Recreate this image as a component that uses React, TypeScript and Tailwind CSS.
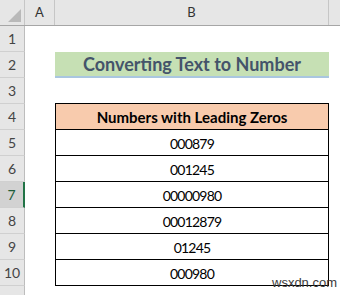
import React from 'react';

const rows = [
  { n: 1 },
  { n: 2, title: 'Converting Text to Number' },
  { n: 3, tableTop: true },
  { n: 4, head: 'Numbers with Leading Zeros' },
  { n: 5, value: '000879' },
  { n: 6, value: '001245' },
  { n: 7, value: '00000980', selected: true },
  { n: 8, value: '00012879' },
  { n: 9, value: '01245' },
  { n: 10, value: '000980' },
  { n: 11, hidden: true },
];

const App: React.FC = () => (
  <div className="relative h-[295px] w-[340px] overflow-hidden bg-white font-['Lato','Open_Sans',sans-serif] text-[14px] text-black">
    {/* Column headers */}
    <div className="flex h-[26px] border-b border-[#a6a6a6] bg-[#e6e6e6] text-[13px] text-[#333]">
      <div className="relative w-[25px] border-r border-[#c6c6c6]">
        <svg className="absolute right-[3px] bottom-[3px]" width="13" height="13" viewBox="0 0 13 13">
          <polygon points="13,0 13,13 0,13" fill="#b9b9b9" />
        </svg>
      </div>
      <div className="flex w-[30px] items-center justify-center border-r border-[#c6c6c6]">A</div>
      <div className="flex w-[274px] items-center justify-center border-r border-[#c6c6c6]">B</div>
      <div className="flex-1" />
    </div>

    {/* Rows */}
    {rows.map((r) => (
      <div key={r.n} className="flex h-[26px]">
        <div
          className={`box-border flex w-[25px] items-center justify-center border-b border-[#d0d0d0] text-[14px] ${
            r.selected ? 'border-r-2 border-r-[#217346] bg-[#d2d2d2] text-[#1e5e3a]' : 'border-r border-r-[#bdbdbd] bg-[#e6e6e6] text-[#444]'
          }`}
        >
          {r.hidden ? '' : r.n}
        </div>
        <div className="w-[30px]" />
        {r.title ? (
          <div className="box-border flex w-[274px] items-center justify-center border-b-2 border-[#a9c6e0] bg-[#c6e0b4] text-[18px] font-bold text-[#44546a]">
            {r.title}
          </div>
        ) : r.tableTop ? (
          <div className="box-border w-[274px] border-b border-black" />
        ) : r.head ? (
          <div className="box-border flex w-[274px] items-center justify-center border-x border-b border-black bg-[#f8cbad] pt-[1px] text-[15px] font-bold">
            {r.head}
          </div>
        ) : r.value ? (
          <div className="box-border flex w-[274px] items-center justify-center border-x border-b border-black pt-[1px] tracking-[-0.8px]">
            {r.value}
          </div>
        ) : (
          <div className="w-[274px]" />
        )}
        <div className="flex-1" />
      </div>
    ))}

    {/* Watermark */}
    <div className="absolute top-[276px] left-[272px] font-['Liberation_Sans',sans-serif] text-[13px] leading-none text-[#3a3a3a]">
      wsxdn.com
    </div>
  </div>
);

export default App;
